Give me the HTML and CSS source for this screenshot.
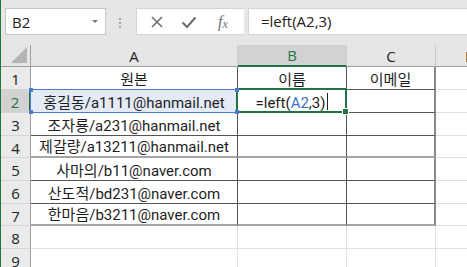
FILE: index.html
```html
<!DOCTYPE html>
<html lang="ko">
<head>
  <meta charset="UTF-8">
  <title>Excel - left 함수</title>
  <link rel="stylesheet" href="styles.css">
</head>
<body>
  <div class="window">
    <!-- 수식 입력줄 -->
    <div class="formula-bar">
      <div class="name-box">
        <span>B2</span>
        <span class="drop"></span>
      </div>
      <div class="grip"><i></i><i></i><i></i></div>
      <div class="fx-buttons">
        <svg class="ico" width="14" height="14" viewBox="0 0 14 14"><path d="M2 2 L12 12 M12 2 L2 12" stroke="#6f6f6f" stroke-width="1.6" fill="none"/></svg>
        <svg class="ico" width="16" height="14" viewBox="0 0 16 14"><path d="M1.5 7.5 L6 12 L14.5 2.5" stroke="#6f6f6f" stroke-width="2.2" fill="none"/></svg>
        <span class="fx">f<sub>x</sub></span>
      </div>
      <div class="formula-input">=left(A2,3)</div>
    </div>

    <!-- 시트 -->
    <div class="sheet">
      <div class="corner"><span class="tri"></span></div>
      <div class="col-head">A</div>
      <div class="col-head active">B</div>
      <div class="col-head">C</div>
      <div class="col-head last">D</div>

      <div class="row-head">1</div>
      <div class="cell t">원본</div>
      <div class="cell t">이름</div>
      <div class="cell t tr">이메일</div>
      <div class="cell"></div>

      <div class="row-head active">2</div>
      <div class="cell t ref">홍길동/a1111@hanmail.net<i class="h h1"></i><i class="h h2"></i><i class="h h3"></i><i class="h h4"></i></div>
      <div class="cell t edit">=left(<span class="blue">A2</span>,3)<span class="caret"></span><i class="fill"></i></div>
      <div class="cell t tr"></div>
      <div class="cell"></div>

      <div class="row-head">3</div>
      <div class="cell t">조자룡/a231@hanmail.net</div>
      <div class="cell t"></div>
      <div class="cell t tr"></div>
      <div class="cell"></div>

      <div class="row-head">4</div>
      <div class="cell t thick">제갈량/a13211@hanmail.net</div>
      <div class="cell t thick"></div>
      <div class="cell t tr thick"></div>
      <div class="cell"></div>

      <div class="row-head">5</div>
      <div class="cell t">사마의/b11@naver.com</div>
      <div class="cell t"></div>
      <div class="cell t tr"></div>
      <div class="cell"></div>

      <div class="row-head">6</div>
      <div class="cell t">산도적/bd231@naver.com</div>
      <div class="cell t"></div>
      <div class="cell t tr"></div>
      <div class="cell"></div>

      <div class="row-head">7</div>
      <div class="cell t thick">한마음/b3211@naver.com</div>
      <div class="cell t thick"></div>
      <div class="cell t tr thick"></div>
      <div class="cell"></div>

      <div class="row-head">8</div>
      <div class="cell"></div>
      <div class="cell"></div>
      <div class="cell"></div>
      <div class="cell"></div>

      <div class="row-head">9</div>
      <div class="cell"></div>
      <div class="cell"></div>
      <div class="cell"></div>
      <div class="cell"></div>
    </div>
  </div>
</body>
</html>
```

FILE: styles.css
```css
/* 기본 */
body {
  margin: 0;
  background: #fff;
  font-family: "Open Sans", "Noto Sans CJK KR", sans-serif;
  overflow: hidden;
}
.window {
  width: 467px;
  height: 267px;
  border-left: 1px solid #217346;
  box-sizing: border-box;
  overflow: hidden;
}

/* 수식 입력줄 */
.formula-bar {
  display: flex;
  align-items: flex-start;
  height: 45px;
  padding-top: 8px;
  box-sizing: border-box;
  background: #e6e6e6;
}
.name-box {
  display: flex;
  align-items: center;
  justify-content: space-between;
  width: 101px;
  height: 27px;
  margin-left: 4px;
  padding: 0 7px 0 6px;
  box-sizing: border-box;
  background: #fff;
  border: 1px solid #c6c6c6;
  font-size: 15px;
  color: #222;
}
.drop {
  width: 0;
  height: 0;
  border-left: 3px solid transparent;
  border-right: 3px solid transparent;
  border-top: 3px solid #777;
}
.grip {
  display: flex;
  flex-direction: column;
  gap: 2px;
  width: 4px;
  margin: 10px 13px 0 13px;
}
.grip i {
  width: 2px;
  height: 2px;
  background: #a8a8a8;
}
.fx-buttons {
  display: flex;
  align-items: center;
  width: 108px;
  height: 27px;
  padding-left: 13px;
  box-sizing: border-box;
  background: #fff;
  border: 1px solid #d4d4d4;
  border-right: none;
}
.ico {
  margin-right: 17px;
}
.ico + .ico {
  margin-right: 21px;
}
.fx {
  font-family: "Liberation Serif", serif;
  font-style: italic;
  font-size: 16px;
  color: #6f6f6f;
  line-height: 1;
}
.fx sub {
  font-size: 12px;
  vertical-align: -1px;
}
.formula-input {
  flex: 1;
  height: 27px;
  margin-left: 4px;
  padding-left: 12px;
  box-sizing: border-box;
  background: #fff;
  border: 1px solid #d4d4d4;
  border-right: none;
  font-size: 15px;
  line-height: 25px;
  color: #222;
}

/* 시트 */
.sheet {
  display: grid;
  grid-template-columns: 30px 207px 109px 89px 40px;
  grid-template-rows: 22px 23px 23px 23px 22px 23px 23px 22px 23px 23px;
}
.corner,
.col-head,
.row-head {
  background: #e6e6e6;
  box-sizing: border-box;
  border-right: 1px solid #bdbdbd;
  border-bottom: 1px solid #9e9e9e;
  font-size: 15px;
  color: #222;
  display: flex;
  align-items: center;
  justify-content: center;
}
.corner {
  position: relative;
  border-right-color: #9e9e9e;
}
.tri {
  position: absolute;
  right: 3px;
  bottom: 3px;
  width: 0;
  height: 0;
  border-left: 16px solid transparent;
  border-bottom: 16px solid #b4b4b4;
}
.col-head {
  border-right-color: #c8c8c8;
  border-bottom-color: #9e9e9e;
}
.col-head.active {
  background: #d2d2d2;
  color: #217346;
  border-bottom: 2px solid #217346;
}
.col-head.last {
  justify-content: flex-start;
  padding-left: 29px;
}
.row-head {
  background: #eaeaea;
  border-right-color: #9e9e9e;
  border-bottom-color: #d4d4d4;
  padding-top: 2px;
}
.row-head.active {
  background: #d2d2d2;
  color: #217346;
  border-right: 2px solid #217346;
}

.cell {
  box-sizing: border-box;
  border-right: 1px solid #e1e1e1;
  border-bottom: 1px solid #e1e1e1;
  font-family: Roboto, "Noto Sans CJK KR", sans-serif;
  font-size: 15px;
  color: #1e1e1e;
  display: flex;
  align-items: flex-end;
  justify-content: center;
  padding-bottom: 0;
  white-space: nowrap;
  position: relative;
}
/* 표 테두리 */
.cell.t {
  border-right-color: #555;
  border-bottom-color: #555;
}
.cell.tr {
  border-right: 2px solid #8a8a8a;
}
.cell.thick {
  border-bottom: 2px solid #a6a6a6;
}

/* 참조 범위 A2 */
.cell.ref {
  background: #e4ebf7;
}
.cell.ref::after {
  content: "";
  position: absolute;
  left: -1px;
  top: -1px;
  right: -1px;
  bottom: -1px;
  border: 1px solid #4a7bd1;
}
.h {
  position: absolute;
  width: 4px;
  height: 4px;
  background: #4a7bd1;
  z-index: 2;
}
.h1 { left: -2px; top: -2px; }
.h2 { right: -2px; top: -2px; }
.h3 { left: -2px; bottom: -2px; }
.h4 { right: -2px; bottom: -2px; }

/* 활성 셀 B2 */
.cell.edit::after {
  content: "";
  position: absolute;
  left: -2px;
  top: -2px;
  right: -1px;
  bottom: -1px;
  border: 2px solid #217346;
}
.blue {
  color: #3c6fd0;
}
.caret {
  display: inline-block;
  width: 1px;
  height: 17px;
  margin: 0 0 2px 2px;
  background: #222;
}
.fill {
  position: absolute;
  right: -3px;
  bottom: -3px;
  width: 5px;
  height: 5px;
  background: #217346;
  border: 1px solid #fff;
  z-index: 3;
}
```
